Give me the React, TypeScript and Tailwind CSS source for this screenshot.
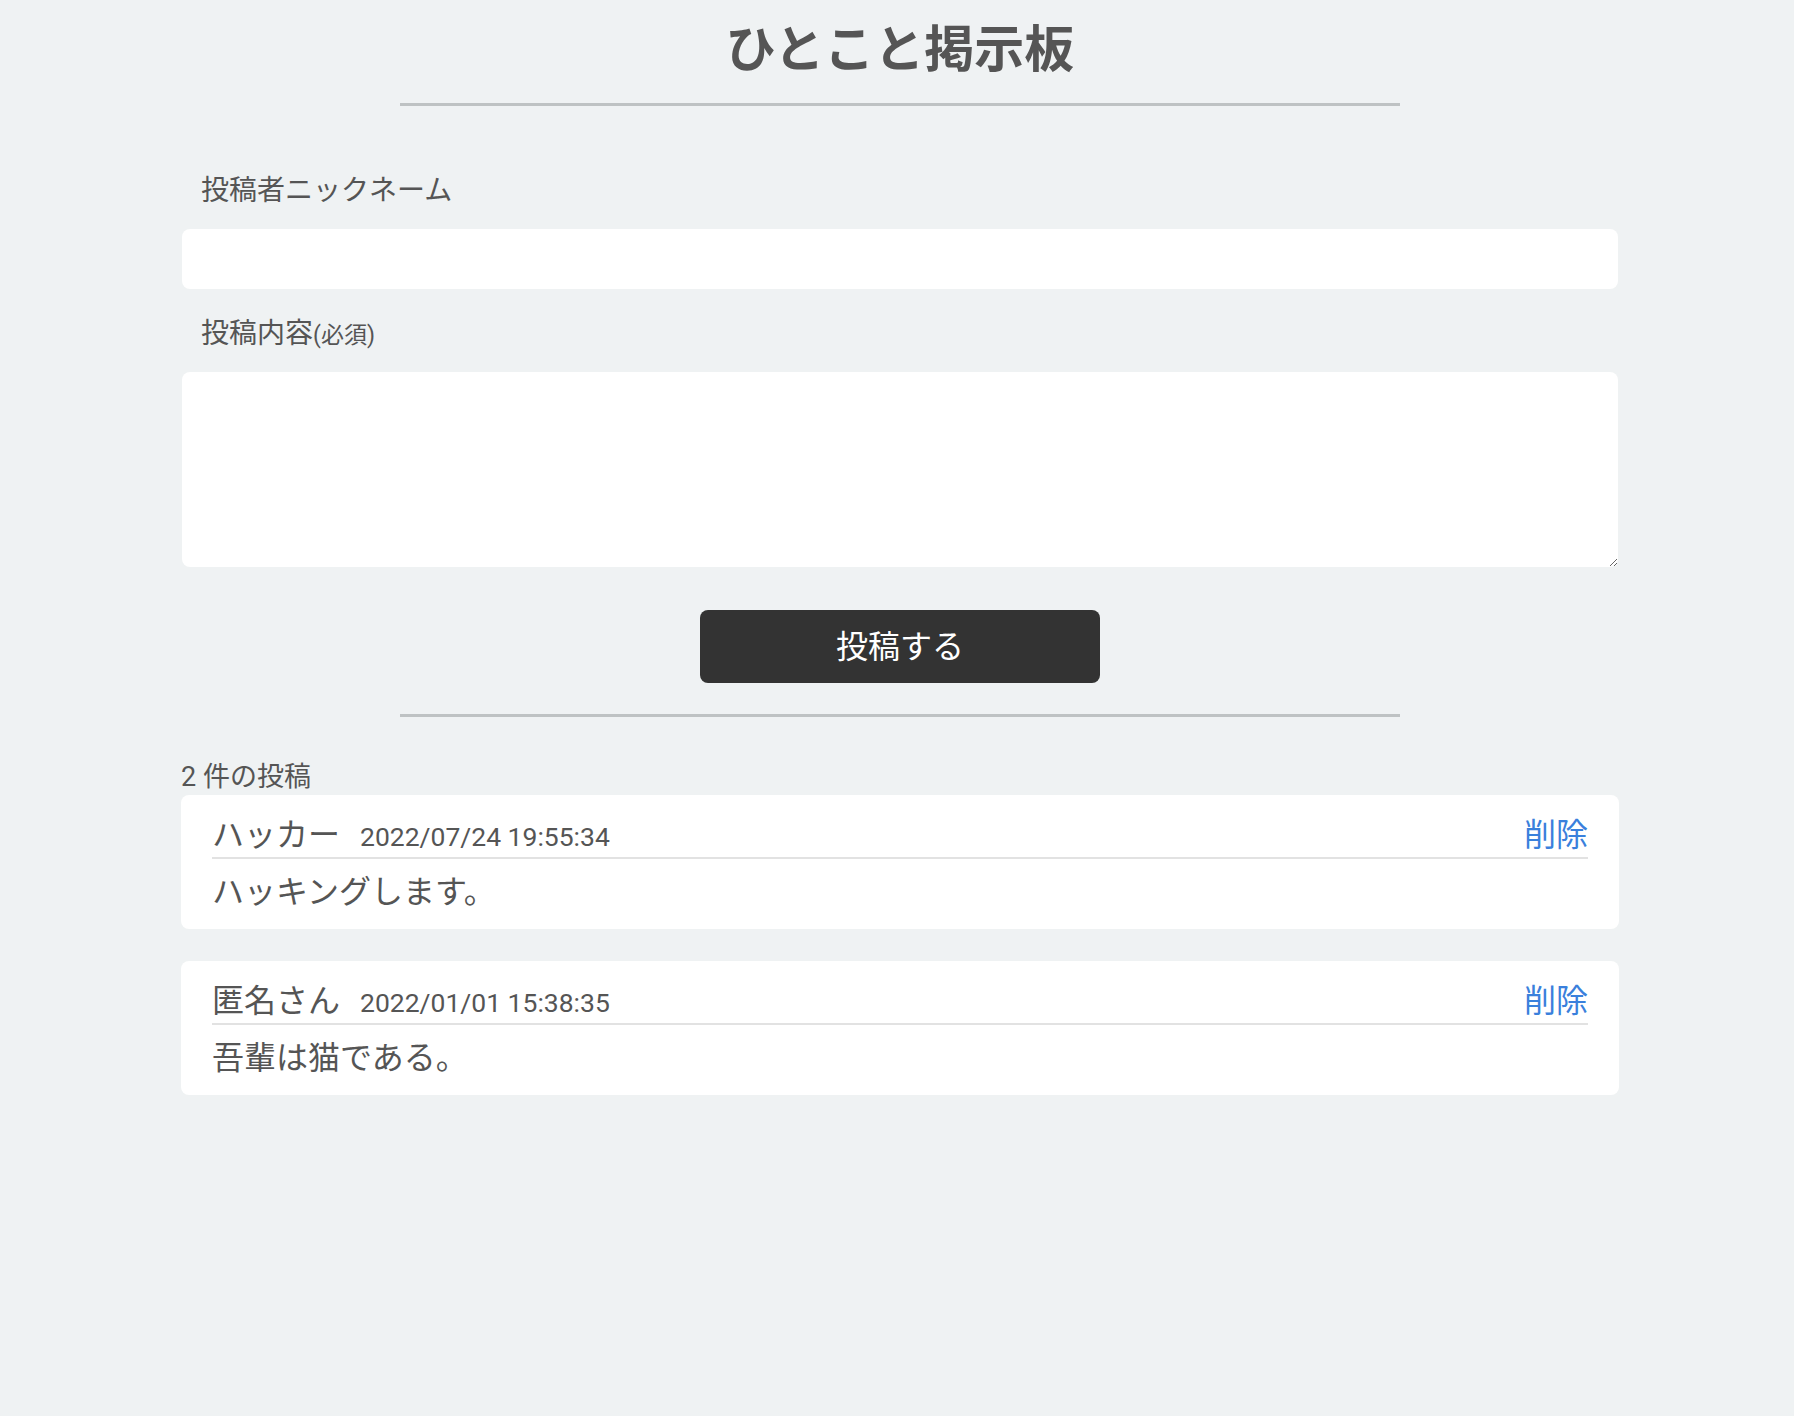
import { useState } from 'react'

type Post = {
  id: number
  name: string
  date: string
  body: string
}

const initialPosts: Post[] = [
  { id: 2, name: 'ハッカー', date: '2022/07/24 19:55:34', body: 'ハッキングします。' },
  { id: 1, name: '匿名さん', date: '2022/01/01 15:38:35', body: '吾輩は猫である。' },
]

const FONT = "font-['Roboto','Noto_Sans_CJK_JP',sans-serif]"

export default function App() {
  const [posts, setPosts] = useState(initialPosts)
  const [name, setName] = useState('')
  const [body, setBody] = useState('')

  const submit = () => {
    if (!body.trim()) return
    const now = new Date()
    const pad = (n: number) => String(n).padStart(2, '0')
    const date = `${now.getFullYear()}/${pad(now.getMonth() + 1)}/${pad(now.getDate())} ${pad(now.getHours())}:${pad(now.getMinutes())}:${pad(now.getSeconds())}`
    setPosts([{ id: Date.now(), name: name || '匿名さん', date, body }, ...posts])
    setName('')
    setBody('')
  }

  return (
    <div className={`min-h-[1416px] bg-[#eff2f3] pt-[20px] pl-[6px] text-[#555555] ${FONT}`}>
      <h1 className="text-center text-[50px] leading-[60px] font-bold text-[#555555]">ひとこと掲示板</h1>
      <hr className="mx-auto mt-[23px] w-[1000px] border-0 h-[3px] bg-[#bec2c3]" />

      <div className="mx-auto w-[1436px]">
        <label className="mt-[65px] block pl-[19px] text-[28px] leading-[40px]">投稿者ニックネーム</label>
        <input
          value={name}
          onChange={(e) => setName(e.target.value)}
          className="mt-[18px] block h-[60px] w-full rounded-lg bg-white px-4 text-[28px] outline-none"
        />

        <label className="mt-[25px] block pl-[19px] text-[28px] leading-[40px]">
          投稿内容<span className="text-[23px]">(必須)</span>
        </label>
        <textarea
          value={body}
          onChange={(e) => setBody(e.target.value)}
          className="mt-[16px] block h-[195px] w-full resize rounded-lg bg-white p-4 text-[28px] outline-none"
        />

        <button
          onClick={submit}
          className="mx-auto mt-[43px] flex h-[73px] w-[400px] items-center justify-center rounded-lg bg-[#333333] text-[32px] text-white"
        >
          投稿する
        </button>
      </div>

      <hr className="mx-auto mt-[31px] w-[1000px] border-0 h-[3px] bg-[#bec2c3]" />

      <div className="mx-auto w-[1438px]">
        <p className="mt-[42px] text-[27px] leading-[36px]">{posts.length} 件の投稿</p>

        <div className="flex flex-col gap-[32px]">
          {posts.map((p) => (
            <div key={p.id} className="rounded-lg bg-white px-[31px] pt-[20px] pb-[17px]">
              <div className="flex items-baseline border-b-2 border-[#e2e2e2]">
                <span className="text-[32px] leading-[40px]">{p.name}</span>
                <span className="ml-[20px] text-[26.5px] leading-[40px]">{p.date}</span>
                <button
                  onClick={() => setPosts(posts.filter((x) => x.id !== p.id))}
                  className="ml-auto text-[32px] leading-[40px] text-[#3a80dc]"
                >
                  削除
                </button>
              </div>
              <p className="mt-[13px] text-[32px] leading-[40px]">{p.body}</p>
            </div>
          ))}
        </div>
      </div>
    </div>
  )
}
